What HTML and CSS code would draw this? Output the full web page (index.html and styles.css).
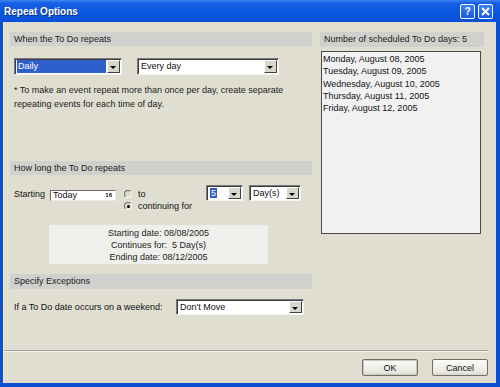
FILE: index.html
```html
<!DOCTYPE html>
<html lang="en">
<head>
    <meta charset="UTF-8">
    <title>Repeat Options</title>
    <link rel="stylesheet" href="styles.css">
</head>
<body>

    <div class="window">
        <div class="titlebar">
            <span class="title">Repeat Options</span>
            <span class="tb-buttons">
                <span class="tb-btn">?</span>
                <span class="tb-btn tb-close">
                    <svg width="9" height="9" viewBox="0 0 9 9"><path d="M1 1 L8 8 M8 1 L1 8" stroke="#fff" stroke-width="2"/></svg>
                </span>
            </span>
        </div>

        <div class="frame">
            <div class="main">
                <div class="left">
                    <div class="section-head">When the To Do repeats</div>
                    <div class="row pattern-row">
                        <div class="combo combo-daily">
                            <span class="combo-text selected">Daily</span>
                            <span class="combo-btn"></span>
                        </div>
                        <div class="combo combo-every">
                            <span class="combo-text">Every day</span>
                            <span class="combo-btn"></span>
                        </div>
                    </div>
                    <p class="note">* To make an event repeat more than once per day, create separate repeating events for each time of day.</p>

                    <div class="section-head head-duration">How long the To Do repeats</div>
                    <div class="row duration-row">
                        <span class="starting-label">Starting</span>
                        <div class="datefield">
                            <span>Today</span>
                            <span class="cal-icon">16</span>
                        </div>
                        <div class="radios">
                            <div class="radio"><span class="dot"></span>to</div>
                            <div class="radio checked"><span class="dot"></span>continuing for</div>
                        </div>
                        <div class="combo combo-num">
                            <span class="combo-text"><span class="sel-digit">5</span></span>
                            <span class="combo-btn"></span>
                        </div>
                        <div class="combo combo-unit">
                            <span class="combo-text">Day(s)</span>
                            <span class="combo-btn"></span>
                        </div>
                    </div>
                    <div class="summary">
                        <div>Starting date: 08/08/2005</div>
                        <div>Continues for:&nbsp; 5 Day(s)</div>
                        <div>Ending date: 08/12/2005</div>
                    </div>

                    <div class="section-head head-exceptions">Specify Exceptions</div>
                    <div class="row weekend-row">
                        <span>If a To Do date occurs on a weekend:</span>
                        <div class="combo combo-weekend">
                            <span class="combo-text">Don't Move</span>
                            <span class="combo-btn"></span>
                        </div>
                    </div>
                </div>

                <div class="right">
                    <div class="section-head">Number of scheduled To Do days: 5</div>
                    <div class="day-list">
                        <div>Monday, August 08, 2005</div>
                        <div>Tuesday, August 09, 2005</div>
                        <div>Wednesday, August 10, 2005</div>
                        <div>Thursday, August 11, 2005</div>
                        <div>Friday, August 12, 2005</div>
                    </div>
                </div>
            </div>

            <div class="footer">
                <div class="separator"></div>
                <div class="buttons">
                    <button class="btn btn-default">OK</button>
                    <button class="btn">Cancel</button>
                </div>
            </div>
        </div>
    </div>

</body>
</html>
```

FILE: styles.css
```css
body {
    margin: 0;
    font-family: "Liberation Sans", Arial, sans-serif;
    font-size: 9px;
    color: #111;
}

.window {
    width: 500px;
    height: 387px;
    display: flex;
    flex-direction: column;
    background: #0b4fd2;
}

/* title bar */
.titlebar {
    height: 22px;
    display: flex;
    align-items: center;
    justify-content: space-between;
    padding: 0 7px 0 4px;
    background: linear-gradient(to bottom, #3d86f2 0, #1660e6 3px, #0b57e0 50%, #0a51d8 100%);
}

.title {
    color: #fff;
    font-weight: bold;
    font-size: 10px;
    text-shadow: 1px 1px 0 #0a2f8c;
}

.tb-buttons {
    display: flex;
    gap: 3px;
}

.tb-btn {
    width: 13px;
    height: 13px;
    border: 1px solid #fff;
    border-radius: 2px;
    background: linear-gradient(to bottom, #3c80f0, #1a5ae0);
    color: #fff;
    font-weight: bold;
    font-size: 10px;
    display: flex;
    align-items: center;
    justify-content: center;
}

/* dialog body */
.frame {
    flex: 1;
    margin: 0 4px 4px 3px;
    background: #dfded1;
    border-left: 1px solid #ecebe2;
    display: flex;
    flex-direction: column;
}

.main {
    flex: 1;
    display: flex;
    gap: 8px;
    padding: 10px 0 0 6px;
}

.left {
    width: 302px;
}

.right {
    width: 164px;
}

.section-head {
    height: 14px;
    line-height: 14px;
    padding-left: 4px;
    background: #d0d0cd;
    color: #222;
}

.row {
    display: flex;
    padding-left: 4px;
}

/* combo boxes */
.combo {
    height: 16px;
    box-sizing: border-box;
    display: flex;
    background: #fff;
    border: 1px solid;
    border-color: #7a7a7a #f4f4f4 #f4f4f4 #7a7a7a;
    box-shadow: inset 1px 1px 0 #3c3c3c;
}

.combo-text {
    flex: 1;
    margin: 1px 1px 1px 2px;
    line-height: 12px;
    padding-left: 1px;
}

.combo-text.selected {
    background: #2f5fcb;
    color: #fff;
}

.combo-btn {
    width: 11px;
    margin: 1px 1px 1px 0;
    background: #d8d7cc;
    border: 1px solid;
    border-color: #fff #404040 #404040 #fff;
    position: relative;
}

.combo-btn::after {
    content: "";
    position: absolute;
    left: 2px;
    top: 5px;
    border-left: 3px solid transparent;
    border-right: 3px solid transparent;
    border-top: 3px solid #000;
}

.pattern-row {
    margin-top: 12px;
    gap: 15px;
}

.combo-daily {
    width: 108px;
    height: 17px;
}

.combo-every {
    width: 142px;
    height: 17px;
}

.note {
    margin: 8px 0 0;
    padding-left: 4px;
    line-height: 14px;
    width: 290px;
    color: #222;
}

.head-duration {
    margin-top: 50px;
}

.duration-row {
    margin-top: 10px;
    height: 40px;
    align-items: flex-start;
}

.starting-label {
    margin-top: 4px;
    line-height: 11px;
    width: 36px;
}

.datefield {
    width: 66px;
    height: 11px;
    margin-top: 5px;
    box-sizing: border-box;
    background: #fff;
    border: 1px solid;
    border-color: #6c6c6c #e8e8e8 #e8e8e8 #6c6c6c;
    display: flex;
    align-items: center;
    justify-content: space-between;
    padding: 0 3px 0 2px;
    line-height: 9px;
}

.cal-icon {
    font-size: 6px;
    font-weight: bold;
}

.radios {
    width: 82px;
    margin: 3px 0 0 8px;
}

.radio {
    height: 12px;
    display: flex;
    align-items: center;
    gap: 6px;
}

.dot {
    width: 6px;
    height: 6px;
    border-radius: 50%;
    border: 1px solid;
    border-color: #6a6a6a #f4f4f4 #f4f4f4 #6a6a6a;
    position: relative;
}

.radio.checked .dot::after {
    content: "";
    position: absolute;
    left: 2px;
    top: 2px;
    width: 3px;
    height: 3px;
    border-radius: 50%;
    background: #000;
}

.combo-num {
    width: 37px;
}

.sel-digit {
    background: #2f5fcb;
    color: #fff;
    padding: 0 1px;
}

.combo-unit {
    width: 52px;
    margin-left: 6px;
}

.summary {
    margin-left: 39px;
    width: 219px;
    height: 39px;
    box-sizing: border-box;
    padding-top: 2px;
    background: #efefec;
    text-align: center;
    line-height: 12px;
    color: #222;
}

.head-exceptions {
    margin-top: 10px;
    height: 15px;
}

.weekend-row {
    margin-top: 10px;
    align-items: center;
    justify-content: space-between;
    padding-right: 8px;
}

.combo-weekend {
    width: 128px;
}

/* scheduled days list */
.right .section-head {
    height: 15px;
    line-height: 15px;
}

.day-list {
    margin: 4px 0 0 1px;
    width: 160px;
    height: 183px;
    box-sizing: border-box;
    background: #f1f1f1;
    border: 1px solid #4a4a4a;
    padding: 1px 0 0 1px;
    line-height: 12.3px;
    color: #111;
}

/* footer */
.footer {
    height: 33px;
}

.separator {
    height: 1px;
    margin-right: 8px;
    background: #a2a29a;
    border-bottom: 1px solid #f4f4ee;
}

.buttons {
    display: flex;
    justify-content: flex-end;
    gap: 14px;
    padding: 7px 8px 0 0;
}

.btn {
    width: 56px;
    height: 17px;
    padding: 0;
    font-family: inherit;
    font-size: 9px;
    color: #111;
    border: 1px solid #6f6f66;
    border-radius: 2px;
    background: linear-gradient(to bottom, #fbfbf8, #e9e8e0 80%, #d8d7cd);
}

.btn-default {
    box-shadow: inset 0 0 0 1px #c9c8bd;
}
```
